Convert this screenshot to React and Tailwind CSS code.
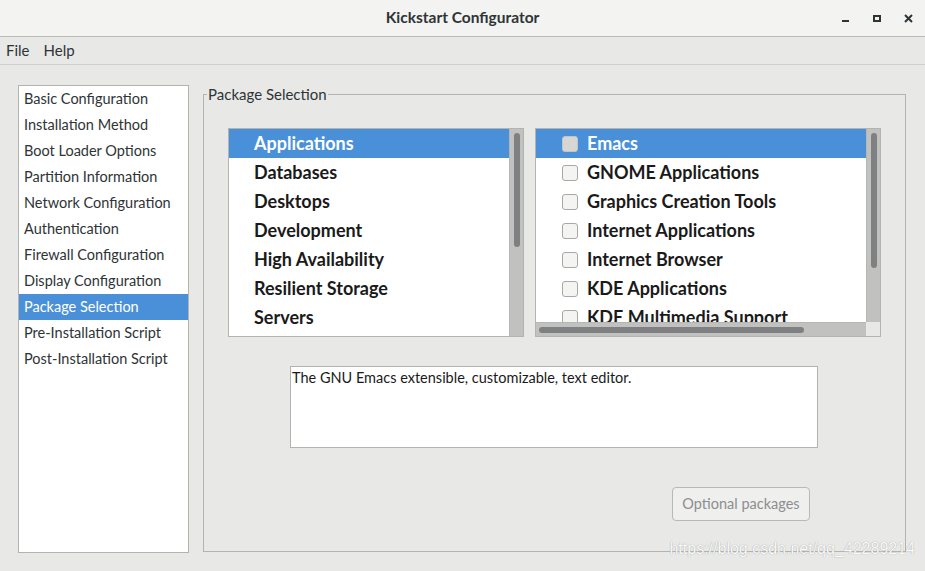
import React from "react";

const sidebar = [
  "Basic Configuration",
  "Installation Method",
  "Boot Loader Options",
  "Partition Information",
  "Network Configuration",
  "Authentication",
  "Firewall Configuration",
  "Display Configuration",
  "Package Selection",
  "Pre-Installation Script",
  "Post-Installation Script",
];

const categories = [
  "Applications",
  "Databases",
  "Desktops",
  "Development",
  "High Availability",
  "Resilient Storage",
  "Servers",
];

const groups = [
  "Emacs",
  "GNOME Applications",
  "Graphics Creation Tools",
  "Internet Applications",
  "Internet Browser",
  "KDE Applications",
  "KDE Multimedia Support",
];

export default function App() {
  return (
    <div className="w-[925px] h-[571px] bg-[#e8e8e7] flex flex-col relative overflow-hidden text-[#2e3436] font-['Lato','Liberation_Sans',sans-serif]">
      {/* Title bar */}
      <div className="h-[37px] shrink-0 bg-[#f3f3f2] border-b border-[#b9b9b6] flex items-center relative">
        <div className="flex-1 text-center text-[15.5px] font-bold text-[#2e3436]">
          Kickstart Configurator
        </div>
        <div className="absolute right-0 top-0 h-full flex items-center">
          <div className="w-[31px] h-full flex items-center justify-center">
            <div className="w-[7px] h-[2px] bg-[#2e3436] mt-[6px]" />
          </div>
          <div className="w-[31px] h-full flex items-center justify-center">
            <div className="w-[8px] h-[7px] border-2 border-[#2e3436]" />
          </div>
          <div className="w-[33px] h-full flex items-center justify-center">
            <svg width="9" height="9" viewBox="0 0 9 9">
              <path d="M1 1 L8 8 M8 1 L1 8" stroke="#2e3436" strokeWidth="2" />
            </svg>
          </div>
        </div>
      </div>

      {/* Menu bar */}
      <div className="h-[28px] shrink-0 border-b border-[#cfcfcc] flex items-center text-[15px] pl-[6px] gap-[14px]">
        <span>File</span>
        <span>Help</span>
      </div>

      {/* Body */}
      <div className="flex-1 flex pl-[18px] pt-[20px]">
        {/* Sidebar list */}
        <div className="w-[171px] h-[468px] bg-white border border-[#b3b3b0] flex flex-col">
          {sidebar.map((s) => (
            <div
              key={s}
              className={
                "h-[26px] shrink-0 flex items-center pl-[5px] text-[14.5px] " +
                (s === "Package Selection" ? "bg-[#4a90d9] text-white" : "")
              }
            >
              {s}
            </div>
          ))}
        </div>

        {/* Frame */}
        <fieldset className="ml-[14px] w-[703px] h-[467px] border border-[#b3b3b0] p-0">
          <legend className="ml-[3px] px-[1px] text-[15px] leading-[18px] text-[#2e3436]">
            Package Selection
          </legend>

          <div className="flex flex-col px-[24px]">
            <div className="flex gap-[11px] mt-[25px]">
              {/* Category list */}
              <div className="w-[296px] h-[209px] bg-white border border-[#b3b3b0] flex overflow-hidden">
                <div className="flex-1 flex flex-col">
                  {categories.map((c, i) => (
                    <div
                      key={c}
                      className={
                        "h-[29px] shrink-0 flex items-center pl-[25px] text-[18px] font-bold " +
                        (i === 0 ? "bg-[#4a90d9] text-white" : "text-[#1a1a1a]")
                      }
                    >
                      {c}
                    </div>
                  ))}
                </div>
                <div className="w-[14px] h-full bg-[#c1c2c0] border-l border-[#b6b6b3] pt-[4px] flex justify-center">
                  <div className="w-[6px] h-[114px] rounded-full bg-[#7e8081]" />
                </div>
              </div>

              {/* Group list */}
              <div className="w-[346px] h-[209px] bg-white border border-[#b3b3b0] flex flex-col overflow-hidden">
                <div className="flex-1 flex min-h-0">
                  <div className="flex-1 flex flex-col overflow-hidden">
                    {groups.map((g, i) => (
                      <div
                        key={g}
                        className={
                          "h-[29px] shrink-0 flex items-center pl-[26px] text-[18px] font-bold " +
                          (i === 0 ? "bg-[#4a90d9] text-white" : "text-[#1a1a1a]")
                        }
                      >
                        <div
                          className={
                            "w-[16px] h-[16px] rounded-[3px] border mr-[9px] shrink-0 " +
                            (i === 0
                              ? "bg-[#d6d6d5] border-[#c4c4c2]"
                              : "bg-[#f4f4f3] border-[#a8a8a5]")
                          }
                        />
                        <span className="whitespace-nowrap">{g}</span>
                      </div>
                    ))}
                  </div>
                  <div className="w-[14px] bg-[#c1c2c0] border-l border-[#b6b6b3] pt-[4px] flex justify-center">
                    <div className="w-[6px] h-[135px] rounded-full bg-[#7e8081]" />
                  </div>
                </div>
                <div className="h-[14px] shrink-0 flex">
                  <div className="flex-1 bg-[#c1c2c0] border-t border-[#b6b6b3] pl-[3px] flex items-center">
                    <div className="w-[265px] h-[6px] rounded-full bg-[#7e8081]" />
                  </div>
                  <div className="w-[14px] bg-[#e8e8e7]" />
                </div>
              </div>
            </div>

            {/* Description */}
            <div className="mt-[29px] ml-[62px] w-[528px] h-[82px] bg-white border border-[#b3b3b0] px-[1px] pt-[2px] text-[14.5px] leading-[18px] text-[#1a1a1a]">
              The GNU Emacs extensible, customizable, text editor.
            </div>

            {/* Button */}
            <div className="mt-[39px] flex justify-end pr-[71px]">
              <div className="w-[138px] h-[34px] rounded-[4px] border border-[#b8b8b5] bg-[#efefee] flex items-center justify-center text-[14.5px] text-[#8b8e8f]">
                Optional packages
              </div>
            </div>
          </div>
        </fieldset>
      </div>

      {/* Watermark */}
      <div className="absolute right-[10px] bottom-[10px] text-[16px] text-[#fafafa] [text-shadow:0_0_1px_#8a8a8a] font-['Liberation_Sans',sans-serif]">
        https://blog.csdn.net/qq_42289214
      </div>
    </div>
  );
}
